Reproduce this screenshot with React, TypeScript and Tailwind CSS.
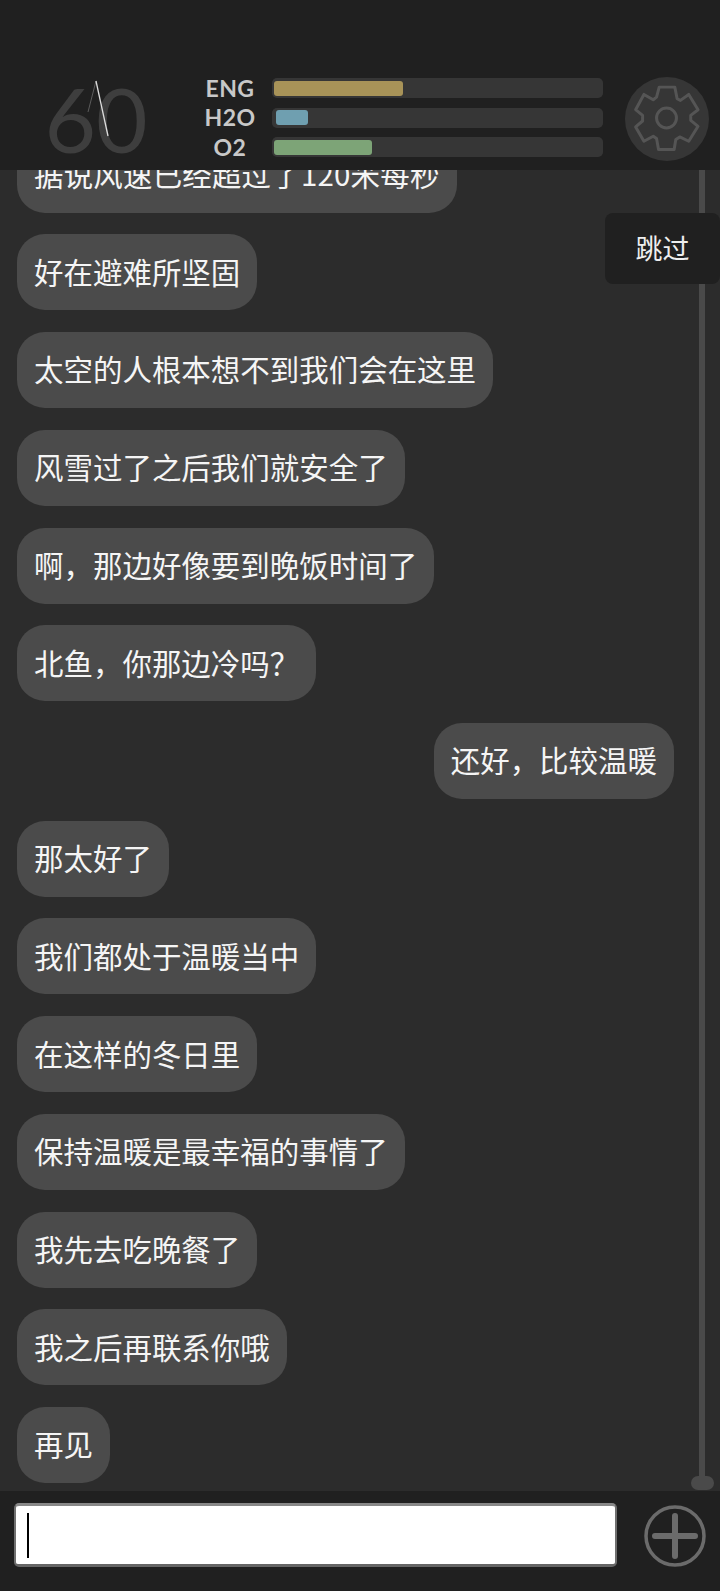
import React from "react";

const messages = [
  { text: "据说风速已经超过了120米每秒", spacing: "tracking-[0.19px]" },
  { text: "好在避难所坚固" },
  { text: "太空的人根本想不到我们会在这里" },
  { text: "风雪过了之后我们就安全了" },
  { text: "啊，那边好像要到晚饭时间了" },
  { text: "北鱼，你那边冷吗？" },
  { text: "还好，比较温暖", mine: true },
  { text: "那太好了" },
  { text: "我们都处于温暖当中" },
  { text: "在这样的冬日里" },
  { text: "保持温暖是最幸福的事情了" },
  { text: "我先去吃晚餐了" },
  { text: "我之后再联系你哦" },
  { text: "再见" },
];

const stats = [
  { label: "ENG", fill: "ml-[2px] w-[129px] bg-[#a89358]" },
  { label: "H2O", fill: "ml-[4px] w-[32px] bg-[#6f9fb0]" },
  { label: "O2", fill: "ml-[2px] w-[98px] bg-[#7da477]" },
];

export default function App() {
  return (
    <div className="relative flex h-[1591px] w-[720px] flex-col overflow-hidden bg-[#2c2c2c] font-['Noto_Sans_CJK_SC',sans-serif] text-white">
      <header className="z-10 flex h-[170px] shrink-0 items-start bg-[#202020] pt-[77px]">
        {/* speed dial */}
        <div className="relative ml-[43px] flex h-[82px] w-[106px] items-center justify-center font-['Lato',sans-serif] text-[89px] leading-none font-normal text-[#3e3e3e]">
          60
          <svg className="absolute top-0 left-0" width="106" height="70" viewBox="0 0 106 70" fill="none">
            <path d="M53 4 L45 35" stroke="#5c5c5c" strokeWidth="1" />
            <path d="M53 4 L65 59" stroke="#dcdcdc" strokeWidth="1.3" />
          </svg>
        </div>

        <div className="mt-[1px] ml-[51px] grid w-[403px] grid-cols-[72px_1fr] items-center gap-y-[9.5px] font-['Lato',sans-serif] text-[23px] leading-none font-bold tracking-[0.5px] text-[#c8c8c8]">
          {stats.map((s) => (
            <React.Fragment key={s.label}>
              <span className="flex h-[20px] items-center justify-center pr-[12px]">{s.label}</span>
              <div className="flex h-[20px] items-center rounded-[5px] bg-[#363636]">
                <div className={`h-[15px] rounded-[3px] ${s.fill}`} />
              </div>
            </React.Fragment>
          ))}
        </div>

        <button className="ml-[22px] flex h-[84px] w-[84px] items-center justify-center rounded-full bg-[#363636]">
          <svg width="84" height="84" viewBox="15 20 253 252" fill="none" stroke="#555555" strokeWidth="9" strokeLinejoin="round">
            <path d="M118 50 L165 50 L172 85 L182 90 L207 72 L235 118 L213 135 L213 150 L235 168 L207 213 L180 200 L168 208 L163 238 L116 238 L110 205 L100 198 L72 213 L47 170 L68 152 L68 135 L47 118 L72 72 L100 88 L110 80 Z" />
            <circle cx="140" cy="143" r="30" />
          </svg>
        </button>
      </header>

      <main className="relative flex flex-1 flex-col justify-end gap-[21.72px] overflow-hidden pb-[8px]">
        {messages.map((m) => (
          <div key={m.text} className={m.mine ? "flex justify-end pr-[46px]" : "flex pl-[17px]"}>
            <div className={`flex h-[76px] shrink-0 items-center rounded-[28px] bg-[#4b4b4b] px-[17px] pb-[3px] text-[29.47px] whitespace-nowrap text-[#f5f5f5] ${m.spacing ?? ""}`}>
              {m.text}
            </div>
          </div>
        ))}

        {/* scrollbar */}
        <div className="absolute top-0 bottom-[8px] left-[699px] w-[6px] bg-[#4a4a4a]" />
        <div className="absolute bottom-[1px] left-[691px] h-[14px] w-[23px] rounded-full bg-[#4a4a4a]" />
        <button className="absolute top-[43px] left-[605px] flex h-[71px] w-[115px] items-center justify-center rounded-[8px] bg-[#202020] text-[27px] text-[#eeeeee]">
          跳过
        </button>
      </main>

      <footer className="z-10 flex h-[100px] shrink-0 items-start bg-[#202020] pt-[12px] pl-[14px]">
        <div className="flex h-[64px] w-[603px] items-center rounded-[5px] border-x-[2.5px] border-t-[3px] border-b-[3px] border-x-[#707070] border-t-[#888888] border-b-[#666666] bg-white pl-[11px]">
          <div className="h-[45px] w-[1.5px] bg-black" />
        </div>
        <svg className="mt-[2px] ml-[27px]" width="62" height="62" viewBox="0 0 62 62" fill="none" stroke="#6b6b6b">
          <circle cx="31" cy="31" r="29" strokeWidth="3.5" />
          <path d="M11 31 H51 M31 11 V51" strokeWidth="6" strokeLinecap="round" />
        </svg>
      </footer>
    </div>
  );
}
